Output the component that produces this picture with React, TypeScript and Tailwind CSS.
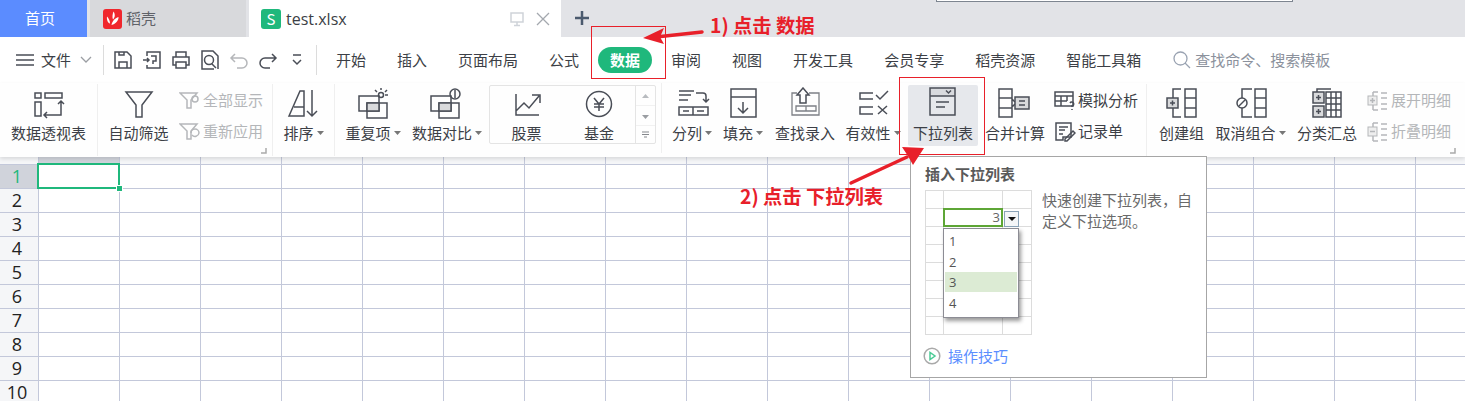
import React from "react";

const S = { fill: "none", stroke: "#4a4e57", strokeWidth: 1.5 } as const;
const G = { fill: "none", stroke: "#b5b7ba", strokeWidth: 1.5 } as const;

const Ic = ({ children, s = 36 }: { children: React.ReactNode; s?: number }) => (
  <svg width={s} height={s} viewBox={`0 0 ${s} ${s}`} className="shrink-0 block">{children}</svg>
);

const Caret = () => (
  <svg width="7" height="4" viewBox="0 0 7 4" className="shrink-0 ml-[3px]"><path d="M0 0h7L3.500 4z" fill="#777" /></svg>
);

const Item = ({ cls, icon, label, caret }: { cls: string; icon: React.ReactNode; label: string; caret?: boolean }) => (
  <div className={`flex flex-col items-center shrink-0 pt-[4px] ${cls}`}>
    <div className="h-[36px] flex items-center justify-center">{icon}</div>
    <div className="h-[20px] flex items-center whitespace-nowrap text-[15px] leading-[20px] text-[#3c3f46]">
      {label}{caret && <Caret />}
    </div>
  </div>
);

const Sep = () => <div className="w-px shrink-0 bg-[#efefef] my-[1px]" />;

const Small = ({ icon, label, muted, cls }: { icon: React.ReactNode; label: string; muted?: boolean; cls?: string }) => (
  <div className={`flex items-center h-[31px] ${cls ?? ""}`}>
    <div className="w-[24px] shrink-0">{icon}</div>
    <span className={`text-[15px] whitespace-nowrap ${muted ? "text-[#b4b6b9]" : "text-[#3c3f46]"}`}>{label}</span>
  </div>
);

const Launcher = ({ cls }: { cls: string }) => (
  <svg width="6" height="6" viewBox="0 0 6 6" className={`absolute ${cls}`}><path d="M5 0v5H0" stroke="#aaa" strokeWidth="1.500" fill="none" /></svg>
);

const tabs = ["开始", "插入", "页面布局", "公式"];
const tabs2 = ["审阅", "视图", "开发工具", "会员专享", "稻壳资源", "智能工具箱"];
const rows = [1, 2, 3, 4, 5, 6, 7, 8, 9, 10];
const cols = Array.from({ length: 18 }, (_, i) => i);

const Sheet = () => (
  <div className="relative grid grid-cols-[39px_repeat(18,81px)] auto-rows-min overflow-hidden h-[244px] bg-white">
    <div className="h-[8px] bg-[#f5f6f8] border-r border-b border-[#c3c8da]" />
    {cols.map((c) => (
      <div key={c} className={`h-[8px] border-r border-b border-[#c3c8da] ${c === 0 ? "bg-[#d0d3db]" : "bg-[#f5f6f8]"}`} />
    ))}
    {rows.map((r) => (
      <React.Fragment key={r}>
        <div className={`h-[24px] border-r border-b border-[#c3c8da] flex items-center justify-center pr-[4px] pb-[1px] font-['Open_Sans',sans-serif] text-[18px] ${r === 1 ? "bg-[#d0d3db] text-[#1fb87c]" : "bg-[#f5f6f8] text-[#222]"}`}>{r}</div>
        {cols.map((c) => <div key={c} className="h-[24px] border-r border-b border-[#c3c8da]" />)}
      </React.Fragment>
    ))}
    <div className="absolute left-[37px] top-[6px] w-[83px] h-[26px] border-[2px] border-[#1fb87c]" />
    <div className="absolute left-[117px] top-[29px] w-[5px] h-[5px] bg-[#1fb87c] outline outline-1 outline-white" />
  </div>
);

const PreviewRow = () => (
  <div className="grid grid-cols-[18px_59px_29px] h-[18px]">
    <div className="border-r border-b border-[#dcdcdc]" />
    <div className="border-r border-b border-[#dcdcdc]" />
    <div className="border-r border-b border-[#dcdcdc]" />
  </div>
);

const Tooltip = () => (
  <div className="absolute z-20 left-[910px] top-[156px] w-[297px] h-[222px] bg-white border border-[#a6a6a6] px-[14px] pt-[7px]">
    <div className="text-[15px] font-bold leading-[20px] text-[#5a5a5a]">插入下拉列表</div>
    <div className="flex mt-[6px]">
      <div className="relative w-[107px] h-[145px] border-l border-t border-[#dcdcdc] shrink-0">
        {[0, 1, 2, 3, 4, 5, 6, 7].map((i) => <PreviewRow key={i} />)}
        <div className="absolute left-[17px] top-[17px] w-[60px] h-[19px] border-[2px] border-[#5ea636] bg-white flex items-center justify-end pr-[1px] text-[13px] text-[#666] font-['Open_Sans',sans-serif]">3</div>
        <div className="absolute left-[78px] top-[20px] w-[15px] h-[16px] border border-[#8aa3b8] bg-[#f4f6f8] flex items-center justify-center">
          <svg width="8" height="4" viewBox="0 0 8 4"><path d="M0 0h8L4 4z" fill="#111" /></svg>
        </div>
        <div className="absolute left-[17px] top-[37px] w-[76px] h-[90px] bg-white border border-[#8c8c94] shadow-[2px_3px_4px_rgba(0,0,0,0.4)] p-[1px] font-['Open_Sans',sans-serif] text-[13px] text-[#555]">
          <div className="h-[21px] pl-[4px] pt-[1px] leading-[21px]">1</div>
          <div className="h-[21px] pl-[4px] pt-[1px] leading-[21px]">2</div>
          <div className="h-[20px] pl-[4px] leading-[20px] bg-[#dcebd4]">3</div>
          <div className="h-[21px] pl-[4px] pt-[1px] leading-[21px]">4</div>
        </div>
      </div>
      <div className="ml-[10px] w-[156px] text-[15px] leading-[21px] -mt-[1px] text-[#6a6a6a]">快速创建下拉列表，自定义下拉选项。</div>
    </div>
    <div className="flex items-center mt-[11px] -ml-[2px]">
      <svg width="18" height="18" viewBox="0 0 18 18" className="shrink-0">
        <circle cx="9" cy="9" r="7.800" fill="#fff" stroke="#a9a9a9" strokeWidth="1.500" />
        <path d="M7 5.500v7l5-3.500z" fill="none" stroke="#4ccb96" strokeWidth="1.500" />
      </svg>
      <span className="ml-[7px] text-[15px] leading-[20px] text-[#5b8eff]">操作技巧</span>
    </div>
  </div>
);

const Annotations = () => (
  <>
    <div className="absolute z-20 left-[591px] top-[26px] w-[75px] h-[53px] border border-[#e8202a]" />
    <div className="absolute z-20 left-[899px] top-[77px] w-[86px] h-[78px] border border-[#e8202a]" />
    <svg className="absolute z-20 left-[640px] top-[20px]" width="70" height="30" viewBox="0 0 70 30">
      <path d="M62 12L16 17" stroke="#e8202a" strokeWidth="3.500" strokeLinecap="round" />
      <path d="M3 18L24 8 L20 17 L24 24z" fill="#e8202a" />
    </svg>
    <svg className="absolute z-30 left-[845px] top-[142px]" width="85" height="46" viewBox="0 0 85 46">
      <path d="M6 41L62 15" stroke="#e8202a" strokeWidth="3.500" strokeLinecap="round" />
      <path d="M79 6L57 5 L63 14 L68 23z" fill="#e8202a" />
    </svg>
    <div className="absolute z-20 left-[710px] top-[12px] text-[19.3px] leading-[26px] font-bold text-[#e8202a] whitespace-nowrap">1) 点击 数据</div>
    <div className="absolute z-20 left-[740px] top-[183px] text-[19.3px] leading-[26px] font-bold text-[#e8202a] whitespace-nowrap">2) 点击 下拉列表</div>
  </>
);

export default function App() {
  return (
    <div className="relative w-[1465px] h-[401px] overflow-hidden bg-white font-['Noto_Sans_CJK_SC','Noto_Sans',sans-serif]">
      {/* title bar */}
      <div className="relative flex h-[37px] bg-[#e2e3e7]">
        <div className="w-[87px] bg-[#5b8cff] text-white text-[15px] flex items-center justify-center pr-[7px]">首页</div>
        <div className="ml-[3px] w-[156px] bg-[#d8d9dc] flex items-center pl-[13px] text-[15px] text-[#5f6268]">
          <svg width="19" height="20" viewBox="0 0 19 20" className="shrink-0">
            <rect width="19" height="20" rx="3" fill="#f0272d" />
            <path d="M10.500 2.500c2 3 1.500 6-.5 8-1-2-.5-5.500.5-8zM4 7.500c1.500 1.500 3 4 3 7-2-.5-3.500-3.500-3-7zM15.500 8c.3 3-2.500 7-7 8 .5-3.500 3.500-7 7-8z" fill="#fff" />
          </svg>
          <span className="ml-[4px]">稻壳</span>
        </div>
        <div className="ml-[3px] w-[312px] bg-white flex items-center pl-[12px]">
          <div className="w-[20px] h-[20px] rounded-[3px] bg-[#1fb87c] text-white text-[15px] leading-[20px] text-center shrink-0">S</div>
          <span className="ml-[5px] text-[16px] text-[#3c3f46] font-['Open_Sans',sans-serif]">test.xlsx</span>
          <div className="ml-auto flex items-center gap-[11px] pr-[11px]">
            <svg width="16" height="16" viewBox="0 0 16 16"><path d="M2 2h12v9H2zM8 11v3M5 14.500h6" fill="none" stroke="#cfd3d9" strokeWidth="1.500" /></svg>
            <svg width="14" height="14" viewBox="0 0 14 14"><path d="M1 1l12 12M13 1L1 13" stroke="#a4a8ae" strokeWidth="1.300" /></svg>
          </div>
        </div>
        <svg width="16" height="16" viewBox="0 0 16 16" className="ml-[13px] mt-[10px]"><path d="M8 1v14M1 8h14" stroke="#4b5a6e" strokeWidth="2.500" /></svg>
        <div className="absolute left-[936px] top-0 w-[357px] h-[2px] bg-white border-b border-l border-r border-[#7d8590]" />
      </div>

      {/* menu row */}
      <div className="flex items-center h-[46px] bg-white pl-[16px] text-[15px] text-[#3c3f46]">
        <svg width="18" height="12" viewBox="0 0 18 12" className="shrink-0"><path d="M0 1h18M0 6h18M0 11h18" stroke="#4a4e57" strokeWidth="1.300" /></svg>
        <span className="ml-[7px]">文件</span>
        <svg width="12" height="8" viewBox="0 0 12 8" className="ml-[9px]"><path d="M1 1l5 5 5-5" fill="none" stroke="#9b9ea3" strokeWidth="1.300" /></svg>
        <div className="w-px h-[30px] bg-[#dcdcdc] ml-[11px] mr-[9px]" />
        <div className="flex items-center gap-[9px] w-[203px] shrink-0">
          <Ic s={20}><path d="M2 2h12l4 4v12H2zM6 18v-6h8v6M6 2v3h5V2" {...S} /></Ic>
          <Ic s={20}><path d="M5 6V2h13v16H5v-3M1 10h6M5 8l2 2-2 2M9 6h5v5H11v3" {...S} /></Ic>
          <Ic s={20}><path d="M5 7V2h10v5M5 15H2V7h16v8h-3M5 12h10v6H5z" {...S} /></Ic>
          <Ic s={20}><path d="M14 19H2V1h11l5 5v13M12 14l4 4" {...S} /><circle cx="9" cy="10" r="4.500" {...S} /></Ic>
          <Ic s={20}><path d="M6 4L2 8l4 4M2 8h11a5 5 0 0 1 0 10H8" {...G} /></Ic>
          <Ic s={20}><path d="M14 4l4 4-4 4M18 8H7a5 5 0 0 0 0 10h5" {...S} /></Ic>
          <Ic s={20}><path d="M6 5h8M6 10l4 4 4-4" {...S} /></Ic>
        </div>
        <div className="w-px h-[30px] bg-[#dcdcdc] mr-[19px]" />
        <div className="flex items-center gap-[31px] whitespace-nowrap">
          {tabs.map((t) => <span key={t}>{t}</span>)}
          <span className="-mx-[12px] w-[54px] h-[26px] rounded-full bg-[#1fb87c] text-white font-bold flex items-center justify-center">数据</span>
          {tabs2.map((t) => <span key={t}>{t}</span>)}
        </div>
        <svg width="18" height="18" viewBox="0 0 18 18" className="ml-[32px] shrink-0"><circle cx="7.500" cy="7.500" r="6.500" fill="none" stroke="#9aa3b2" strokeWidth="1.300" /><path d="M12 12l5 5" stroke="#9aa3b2" strokeWidth="1.300" /></svg>
        <span className="ml-[4px] text-[#8b919c] whitespace-nowrap">查找命令、搜索模板</span>
      </div>

      {/* ribbon */}
      <div className="relative z-10 flex h-[74px] bg-[#fefefe] shadow-[0_2px_4px_rgba(0,0,0,0.12)]">
        <Item cls="w-[97px]" label="数据透视表" icon={<Ic><path d="M4 6h6v5H4zM14 6h17v5H14zM4 15h6v14H4zM30 14v14H14M16 25l-3 3 3 3M27 17l3-3 3 3" {...S} /></Ic>} />
        <Sep />
        <Item cls="w-[81px]" label="自动筛选" icon={<Ic><path d="M5 5h26L21 18v12h-6V18z" {...S} /></Ic>} />
        <div className="w-[93px] shrink-0 pt-[2px]">
          <Small muted label="全部显示" icon={<Ic s={22}><path d="M1 3h17l-6 7v8h-4v-8z" {...G} /><circle cx="16" cy="9" r="3" {...G} /></Ic>} />
          <Small muted label="重新应用" icon={<Ic s={22}><path d="M1 3h17l-6 7v8h-4v-8z" {...G} /><path d="M12 12a4 4 0 0 1 8 0 4 4 0 0 1-7 2" {...G} /></Ic>} />
        </div>
        <Launcher cls="left-[261px] top-[65px]" />
        <Sep />
        <Item cls="w-[61px]" label="排序" caret icon={<Ic><path d="M3 29L14 4h4v25H3zM8 20h10M26 3v26M21 24l5 5 5-5" {...S} /></Ic>} />
        <Sep />
        <Item cls="w-[76px]" label="重复项" caret icon={<Ic><path d="M4 9h20v15H4zM12 16h20v15H12z" {...S} /><rect x="12" y="16" width="12" height="8" fill="#d9dadc" stroke="#4a4e57" strokeWidth="1.500" /><circle cx="26" cy="8" r="2.500" {...S} /><path d="M26 1v2M20 3l2 2M32 3l-2 2M33 8h-3" {...S} /></Ic>} />
        <Item cls="w-[72px]" label="数据对比" caret icon={<Ic><path d="M2 9h20v15H2zM10 16h20v15H10z" {...S} /><rect x="10" y="16" width="12" height="8" fill="#d9dadc" stroke="#4a4e57" strokeWidth="1.500" /><circle cx="26" cy="7" r="5" {...S} /><path d="M26 3v8" {...S} /></Ic>} />
        <div className="ml-[6px] mt-[2px] w-[167px] h-[59px] border border-[#e4e4e4] rounded-[2px] flex shrink-0">
          <div className="w-[73px] flex flex-col items-center">
            <div className="h-[36px] flex items-center"><Ic s={28}><path d="M3 4v21h23M3 21l8-8 5 5L26 6M19 5h8v8" {...S} /></Ic></div>
            <span className="text-[15px] leading-[20px] text-[#3c3f46] mt-[1px]">股票</span>
          </div>
          <div className="w-[72px] flex flex-col items-center">
            <div className="h-[36px] flex items-center"><Ic s={28}><circle cx="14" cy="14" r="12.500" {...S} /><path d="M9 8l5 6 5-6M14 14v7M9 14h10M9 17h10" {...S} /></Ic></div>
            <span className="text-[15px] leading-[20px] text-[#3c3f46] mt-[1px]">基金</span>
          </div>
          <div className="flex-1 border-l border-[#e4e4e4] flex flex-col items-center">
            <div className="h-[20px] w-full flex items-center justify-center border-b border-[#f1f1f1]"><svg width="7" height="4" viewBox="0 0 7 4"><path d="M3.500 0L7 4H0z" fill="#b8bbbf" /></svg></div>
            <div className="h-[20px] w-full flex items-center justify-center border-b border-[#f1f1f1]"><svg width="7" height="6" viewBox="0 0 7 6"><path d="M0 2h7L3.500 6z" fill="#9a9da2" /></svg></div>
            <div className="flex-1 w-full flex items-center justify-center"><svg width="7" height="7" viewBox="0 0 7 7"><path d="M0 1h7M0 3.500h7M2 6h3" stroke="#85888d" /></svg></div>
          </div>
        </div>
        <div className="w-px ml-[5px] h-[70px] bg-[#efefef] shrink-0" />
        <Item cls="w-[60px]" label="分列" caret icon={<Ic><path d="M5 4h15M5 8h12M5 13h9M22 6h7a3 3 0 0 1 3 3v6M29 12l3 3 3-3M5 20h14v8H5zM19 20h15v8H19zM9 24h6M23 24h7" {...S} /></Ic>} />
        <Item cls="w-[42px]" label="填充" caret icon={<Ic><path d="M6 2h25v28H6zM6 10h25M18 15v11M13 21l5 5 5-5" {...S} /></Ic>} />
        <Item cls="w-[82px]" label="查找录入" icon={<Ic><path d="M10 6H5v22h27V6h-10M9 19h20v5H9zM19 19v5" fill="none" stroke="#7d8086" strokeWidth="1.300" /><path d="M16 1l-6 7h3v8h6V8h3z" {...S} /></Ic>} />
        <Item cls="w-[54px]" label="有效性" caret icon={<Ic><path d="M18 6H5v6h13M18 20H5v7h13M21 8l4 4 8-8M23 19l9 8M32 19l-9 8" {...S} /></Ic>} />
        <div className="ml-[8px] mt-[2px] w-[70px] h-[61px] bg-[#e6e8ec] rounded-[2px] shrink-0 flex flex-col items-center pt-[2px]">
          <div className="h-[36px] flex items-start"><Ic s={30}><rect x="2" y="1" width="25" height="8" fill="#d8dade" /><path d="M2 1h25v27H2zM2 9h25M8 15h13M8 20h9M18 3.500l2.500 2.500 2.500-2.500" stroke="#4a4e57" strokeWidth="1.500" fill="none" /></Ic></div>
          <span className="text-[15px] leading-[20px] text-[#3c3f46] whitespace-nowrap">下拉列表</span>
        </div>
        <Item cls="w-[74px]" label="合并计算" icon={<Ic><path d="M2 2h13v28H2zM2 11h13M2 21h13M15 12l3 3M15 20l3-3" {...S} /><rect x="18" y="10" width="14" height="12" fill="#d9dadc" stroke="#4a4e57" strokeWidth="1.500" /><path d="M22 14h6M22 18h6" {...S} /></Ic>} />
        <div className="w-[94px] shrink-0 pl-[2px] pt-[2px]">
          <Small label="模拟分析" icon={<Ic s={22}><path d="M1 2h18v14H1zM1 6h18M1 11h12M7 6v10M13 6v5" {...S} /><path d="M16 13a2 2 0 1 1 2 3v1M18 19v1" {...S} /></Ic>} />
          <Small label="记录单" icon={<Ic s={22}><path d="M2 2h15v14H9v3H2zM5 6h9M5 9h6M5 13h4" {...S} /><path d="M11 18l8-8 2 2-8 8h-2z" {...S} /></Ic>} />
        </div>
        <Sep />
        <Item cls="w-[69px]" label="创建组" icon={<Ic><path d="M17 2H9v9M9 21v9h8M21 2h11v28H21zM21 11h11M21 21h11" {...S} /><rect x="3" y="11" width="11" height="10" fill="#d9dadc" stroke="#4a4e57" strokeWidth="1.500" /><path d="M6 16h5M8.500 13.500v5" {...S} /></Ic>} />
        <Item cls="w-[69px]" label="取消组合" caret icon={<Ic><path d="M19 2H9v9M9 21v9h10M22 2h11v28H22zM22 11h11M22 21h11" {...S} /><circle cx="9" cy="16" r="5" {...S} /><path d="M6 19l6-6" {...S} /></Ic>} />
        <Item cls="w-[84px]" label="分类汇总" icon={<Ic><path d="M8 5V2h14M17 5h15v25H17zM22 5v25M27 5v25M17 11h15M17 17h15M17 23h15" {...S} /><rect x="4" y="5" width="11" height="11" fill="#d9dadc" stroke="#4a4e57" strokeWidth="1.500" /><rect x="4" y="19" width="11" height="11" fill="#d9dadc" stroke="#4a4e57" strokeWidth="1.500" /><path d="M7 10.500h5M9.500 8v5M7 24.500h5M9.500 22v5" {...S} /></Ic>} />
        <div className="w-[91px] shrink-0 -ml-[2px] pt-[2px]">
          <Small muted label="展开明细" icon={<Ic s={22}><path d="M6 2h5M6 20h5M6 2v5M6 15v5M14 3h6M14 8h6M14 14h6M14 19h6" {...G} /><rect x="1" y="6" width="9" height="9" fill="#eee" stroke="#b5b7ba" /><path d="M3 10.500h5M5.500 8v5" {...G} /></Ic>} />
          <Small muted label="折叠明细" icon={<Ic s={22}><path d="M6 2h5M6 20h5M6 2v5M6 15v5M14 3h6M14 8h6M14 14h6M14 19h6" {...G} /><rect x="1" y="6" width="9" height="9" fill="#eee" stroke="#b5b7ba" /><path d="M3 10.500h5" {...G} /></Ic>} />
        </div>
        <Launcher cls="left-[1450px] top-[65px]" />
      </div>

      <Sheet />
      <Tooltip />
      <Annotations />
    </div>
  );
}
